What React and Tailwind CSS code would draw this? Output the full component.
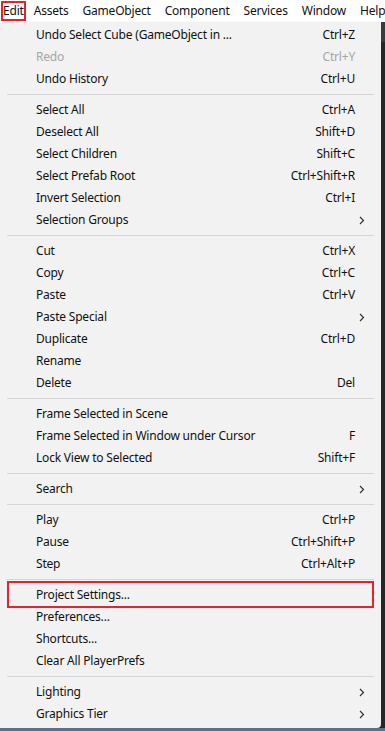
import React from 'react';

const groups = [
  [
    { label: 'Undo Select Cube (GameObject in ...', key: 'Ctrl+Z' },
    { label: 'Redo', key: 'Ctrl+Y', disabled: true },
    { label: 'Undo History', key: 'Ctrl+U' },
  ],
  [
    { label: 'Select All', key: 'Ctrl+A' },
    { label: 'Deselect All', key: 'Shift+D' },
    { label: 'Select Children', key: 'Shift+C' },
    { label: 'Select Prefab Root', key: 'Ctrl+Shift+R' },
    { label: 'Invert Selection', key: 'Ctrl+I' },
    { label: 'Selection Groups', sub: true },
  ],
  [
    { label: 'Cut', key: 'Ctrl+X' },
    { label: 'Copy', key: 'Ctrl+C' },
    { label: 'Paste', key: 'Ctrl+V' },
    { label: 'Paste Special', sub: true },
    { label: 'Duplicate', key: 'Ctrl+D' },
    { label: 'Rename' },
    { label: 'Delete', key: 'Del' },
  ],
  [
    { label: 'Frame Selected in Scene' },
    { label: 'Frame Selected in Window under Cursor', key: 'F' },
    { label: 'Lock View to Selected', key: 'Shift+F' },
  ],
  [{ label: 'Search', sub: true }],
  [
    { label: 'Play', key: 'Ctrl+P' },
    { label: 'Pause', key: 'Ctrl+Shift+P' },
    { label: 'Step', key: 'Ctrl+Alt+P' },
  ],
  [
    { label: 'Project Settings...', boxed: true },
    { label: 'Preferences...' },
    { label: 'Shortcuts...' },
    { label: 'Clear All PlayerPrefs' },
  ],
  [
    { label: 'Lighting', sub: true },
    { label: 'Graphics Tier', sub: true },
  ],
];

const menus = ['Assets', 'GameObject', 'Component', 'Services', 'Window', 'Help'];

const Chevron = () => (
  <svg width="6" height="10" viewBox="0 0 6 10" className="absolute left-[359px] top-[7px]">
    <path d="M1 1 L4.5 4.5 L1 8" fill="none" stroke="#333" strokeWidth="1.2" />
  </svg>
);

const Item = ({ item }) => (
  <div className={`relative h-[22px] flex items-center pl-[36px] pr-[26px] ${item.disabled ? 'text-[#a6a6a6]' : 'text-[#111]'}`}>
    {item.boxed && (
      <div className="absolute left-[7px] right-[7px] top-[-3px] bottom-[-2px] border-2 border-[#e8212a]" />
    )}
    <span className="flex-1 whitespace-nowrap">{item.label}</span>
    {item.key && <span className="whitespace-nowrap">{item.key}</span>}
    {item.sub && <Chevron />}
  </div>
);

export default function App() {
  return (
    <div className="w-[385px] h-[731px] flex flex-col bg-[#2a2a2a] text-[12px] tracking-[-0.2px] overflow-hidden" style={{ fontFamily: '"Noto Sans", "Liberation Sans", sans-serif' }}>
      <div className="h-[22px] bg-white flex items-center text-[#111] whitespace-nowrap">
        <div className="ml-[1px] h-[20px] w-[30px] border-2 border-[#e8212a] flex items-center justify-center">Edit</div>
        <div className="flex gap-[14px] ml-[8px]">
          {menus.map((m) => (
            <span key={m}>{m}</span>
          ))}
        </div>
      </div>
      <div className="flex flex-1">
        <div className="w-[381px] bg-[#f2f2f2] pt-[2px] pb-[3px] rounded-br-[4px] shadow-[1px_1px_2px_rgba(0,0,0,0.4)] self-start">
          {groups.map((g, gi) => (
            <div key={gi}>
              {gi > 0 && (
                <div className="h-[9px] flex items-center px-[7px]">
                  <div className="h-px w-full bg-[#d6d6d6]" />
                </div>
              )}
              {g.map((item) => (
                <Item key={item.label} item={item} />
              ))}
            </div>
          ))}
        </div>
        <div className="flex-1 bg-[#2b2b2b] flex flex-col">
          <div className="h-[20px] bg-[#3a3a3a]" />
          <div className="flex-1 bg-[#262626]" />
        </div>
      </div>
      <div className="h-[3px] bg-[#5b708d]" />
    </div>
  );
}
